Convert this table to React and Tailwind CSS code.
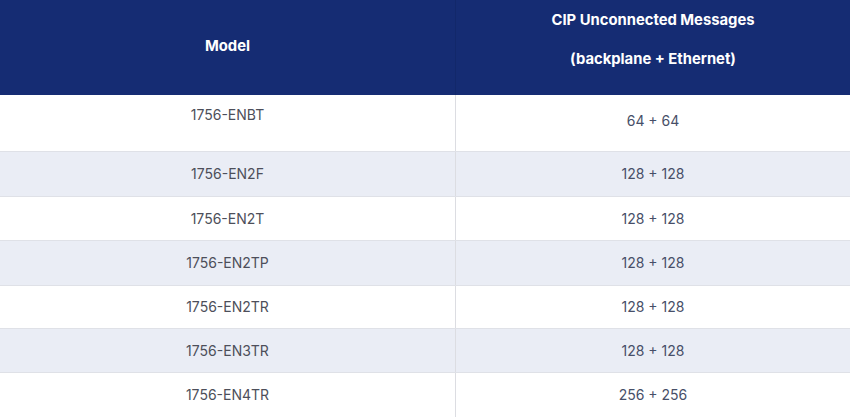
import React from "react";

const rows = [
  { m: "1756-ENBT", v: "64 + 64", h: "h-[56px]", first: true },
  { m: "1756-EN2F", v: "128 + 128", h: "h-[45px]", gray: true },
  { m: "1756-EN2T", v: "128 + 128", h: "h-[44px]" },
  { m: "1756-EN2TP", v: "128 + 128", h: "h-[45px]", gray: true },
  { m: "1756-EN2TR", v: "128 + 128", h: "h-[43px]" },
  { m: "1756-EN3TR", v: "128 + 128", h: "h-[44px]", gray: true },
  { m: "1756-EN4TR", v: "256 + 256", h: "h-[45px]" },
];

export default function App() {
  return (
    <div
      className="w-[850px] h-[417px] overflow-hidden bg-white"
      style={{ fontFamily: "Inter, 'Noto Sans', sans-serif" }}
    >
      <div className="grid grid-cols-[455px_1fr] h-[95px] bg-[#152c73] text-white font-bold text-[14.8px]">
        <div className="flex items-center justify-center pb-[3px]">Model</div>
        <div className="flex flex-col items-center border-l border-[#12286a] pt-[10px]">
          <p className="leading-[20px]">CIP Unconnected Messages</p>
          <p className="leading-[20px] mt-[19px]">(backplane + Ethernet)</p>
        </div>
      </div>
      {rows.map((r, i) => (
        <div
          key={i}
          className={`grid grid-cols-[455px_1fr] ${r.h} ${r.gray ? "bg-[#eaedf5]" : "bg-white"} ${i > 0 ? "border-t border-[#dfe1e7]" : ""} text-[14px]`}
        >
          <div
            className={`flex justify-center text-[#4d4f5a] ${r.first ? "items-start pt-[8px]" : "items-center"}`}
          >
            <span className="leading-[24px]">{r.m}</span>
          </div>
          <div
            className={`flex justify-center border-l border-[#dcdde2] text-[#474f68] ${r.first ? "items-start pt-[14px]" : "items-center"}`}
          >
            <span className="leading-[24px]">{r.v}</span>
          </div>
        </div>
      ))}
    </div>
  );
}
